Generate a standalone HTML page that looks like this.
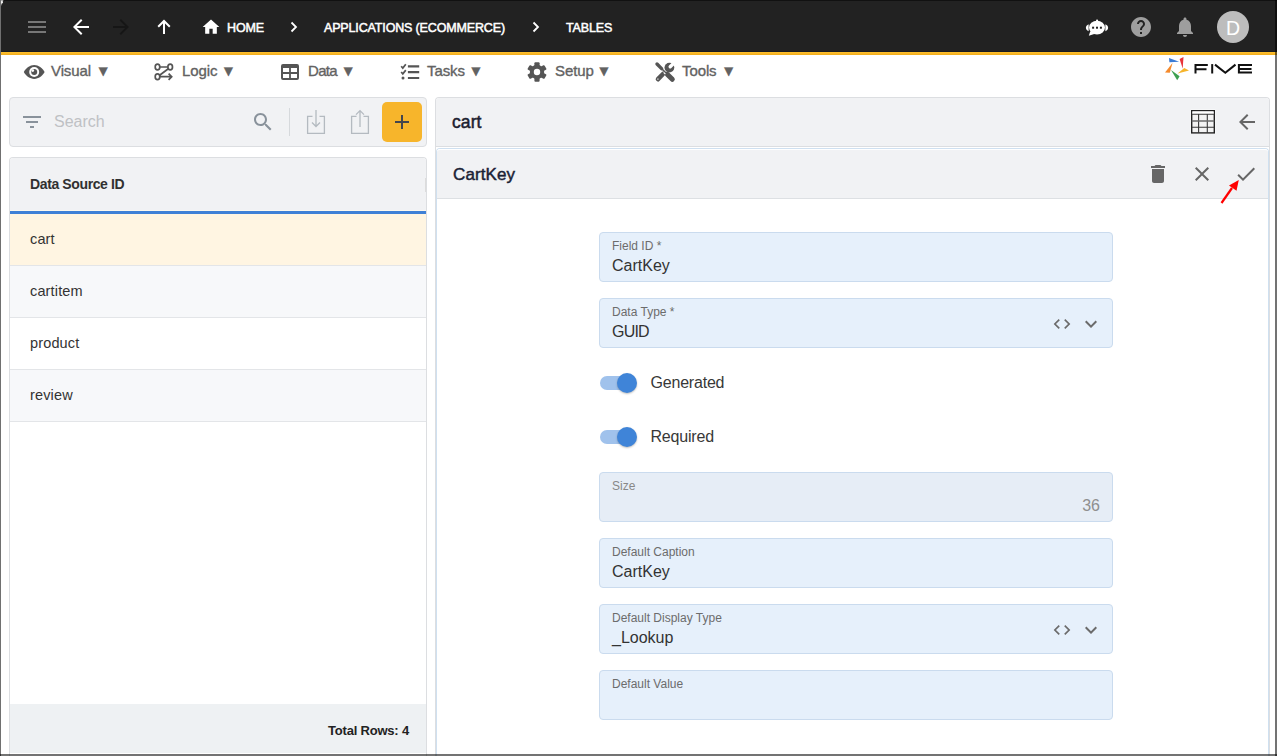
<!DOCTYPE html>
<html><head><meta charset="utf-8">
<style>
*{margin:0;padding:0;box-sizing:border-box}
html,body{width:1277px;height:756px;overflow:hidden;background:#fff;font-family:"Liberation Sans",sans-serif}
.a{position:absolute}
svg{position:absolute;overflow:visible}
#top{left:0;top:0;width:1277px;height:52px;background:#222}
#topline0{left:0;top:0;width:1277px;height:1px;background:#111}
#topline{left:0;top:51px;width:1277px;height:1px;background:#181b22}
#yel{left:0;top:52px;width:1277px;height:3px;background:linear-gradient(#fcbe2c 0,#fcbe2c 1px,#f8b626 1px,#f8b626 2px,#f2af1e 2px)}
.crumb{color:#fff;font-size:12.5px;top:20px;letter-spacing:-0.15px;-webkit-text-stroke:0.5px #fff;line-height:16px;white-space:nowrap}
.menu{color:#626262;font-size:15px;top:62px;letter-spacing:-0.1px;-webkit-text-stroke:0.35px #626262;line-height:18px;white-space:nowrap}
.panel{border:1px solid #dcdee1;border-radius:4px;background:#f1f2f4}
.row{left:10px;width:416px;height:52px;border-bottom:1px solid #e3e5e8}
.rowt{left:20px;top:16px;font-size:14.5px;letter-spacing:0.15px;color:#333;line-height:18px}
.fld{left:599px;width:514px;height:50px;border:1px solid #cadbee;border-radius:4px;background:#e6f0fb}
.lbl{left:12px;top:6px;font-size:12px;color:#6c6c6c;line-height:14px;white-space:nowrap}
.val{left:12px;top:22.8px;font-size:16px;color:#333;line-height:20px;white-space:nowrap}
.frame{background:rgba(0,0,0,.55)}
</style></head><body>
<!-- top bar -->
<div id="top" class="a"></div>
<div id="topline0" class="a"></div>
<div id="topline" class="a"></div>
<div id="yel" class="a"></div>

<!-- hamburger -->
<svg class="a" style="left:25px;top:15px" width="24" height="24" viewBox="0 0 24 24"><path d="M3 18h18v-2H3v2zm0-5h18v-2H3v2zm0-7v2h18V6H3z" fill="#777"/></svg>
<!-- back -->
<svg class="a" style="left:69px;top:15px" width="24" height="24" viewBox="0 0 24 24"><path d="M20 11H7.83l5.59-5.59L12 4l-8 8 8 8 1.41-1.41L7.83 13H20v-2z" fill="#fff"/></svg>
<!-- forward -->
<svg class="a" style="left:109px;top:15px" width="24" height="24" viewBox="0 0 24 24"><path d="M12 4l-1.41 1.41L16.17 11H4v2h12.17l-5.58 5.59L12 20l8-8z" fill="#161616"/></svg>
<!-- up -->
<svg class="a" style="left:152px;top:15px" width="24" height="24" viewBox="0 0 24 24"><path d="M12 6.2V19M6.2 11.8L12 6l5.8 5.8" stroke="#fff" stroke-width="2" fill="none"/></svg>
<!-- home -->
<svg class="a" style="left:201px;top:17px" width="20" height="20" viewBox="0 0 24 24"><path d="M10 20v-6h4v6h5v-8h3L12 3 2 12h3v8z" fill="#fff"/></svg>
<div class="a crumb" style="left:227px">HOME</div>
<svg class="a" style="left:285px;top:15px" width="18" height="24" viewBox="0 0 18 24"><path d="M6.5 7.5l4.5 4.5-4.5 4.5" stroke="#fff" stroke-width="1.8" fill="none"/></svg>
<div class="a crumb" style="left:324px">APPLICATIONS (ECOMMERCE)</div>
<svg class="a" style="left:527px;top:15px" width="18" height="24" viewBox="0 0 18 24"><path d="M6.5 7.5l4.5 4.5-4.5 4.5" stroke="#fff" stroke-width="1.8" fill="none"/></svg>
<div class="a crumb" style="left:566px">TABLES</div>

<!-- right top icons -->
<svg class="a" style="left:1085px;top:15px" width="24" height="24" viewBox="0 0 24 24" id="bot">
  <path d="M3.6 9.3C1.8 10.2 0.9 11.4 0.9 12.75S1.8 15.3 3.6 16.2z" fill="#fff"/>
  <path d="M20.4 9.3C22.2 10.2 23.1 11.4 23.1 12.75S22.2 15.3 20.4 16.2z" fill="#fff"/>
  <ellipse cx="12" cy="12.6" rx="8" ry="6.8" fill="#fff"/>
  <rect x="11" y="4.6" width="2.1" height="4" rx="1" fill="#fff"/>
  <path d="M5.3 16.2 L3.8 20.8 L10 18.8z" fill="#fff"/>
  <rect x="7.1" y="11.7" width="2" height="2" fill="#222"/>
  <rect x="11" y="11.7" width="2" height="2" fill="#222"/>
  <rect x="14.9" y="11.7" width="2" height="2" fill="#222"/>
</svg>
<svg class="a" style="left:1129px;top:15px" width="24" height="24" viewBox="0 0 24 24"><path d="M12 2C6.48 2 2 6.48 2 12s4.48 10 10 10 10-4.48 10-10S17.52 2 12 2zm1 17h-2v-2h2v2zm2.07-7.75l-.9.92C13.45 12.9 13 13.5 13 15h-2v-.5c0-1.1.45-2.1 1.17-2.83l1.24-1.26c.37-.36.59-.86.59-1.41 0-1.1-.9-2-2-2s-2 .9-2 2H8c0-2.21 1.79-4 4-4s4 1.79 4 4c0 .88-.36 1.68-.93 2.25z" fill="#9e9e9e"/></svg>
<svg class="a" style="left:1173px;top:15px" width="24" height="24" viewBox="0 0 24 24"><path d="M12 22c1.1 0 2-.9 2-2h-4c0 1.1.89 2 2 2zm6-6v-5c0-3.07-1.64-5.64-4.5-6.32V4c0-.83-.67-1.5-1.5-1.5s-1.5.67-1.5 1.5v.68C7.63 5.36 6 7.92 6 11v5l-2 2v1h16v-1l-2-2z" fill="#9e9e9e"/></svg>
<div class="a" style="left:1217px;top:11px;width:32px;height:32px;border-radius:50%;background:#bdbdbd;color:#fff;font-size:19.5px;line-height:34px;text-align:center">D</div>

<!-- menu bar -->
<svg class="a" style="left:23px;top:60px" width="24" height="24" viewBox="0 0 24 24">
  <path d="M0.8 12C3 8.1 6.9 5.1 11.2 5.1S19.4 8.1 21.6 12C19.4 15.9 15.5 18.9 11.2 18.9S3 15.9 0.8 12z" fill="#555"/>
  <circle cx="11.2" cy="12" r="5" fill="#fff"/>
  <circle cx="11.2" cy="12" r="3" fill="#555"/>
  <circle cx="9.8" cy="10.6" r="1.3" fill="#fff"/>
</svg>
<div class="a menu" style="left:51px">Visual</div><div class="a menu" style="left:95.8px">▼</div>
<div class="a menu" style="left:182px">Logic</div><div class="a menu" style="left:221px">▼</div>
<div class="a menu" style="left:308px;letter-spacing:-0.7px">Data</div><div class="a menu" style="left:340.8px">▼</div>
<div class="a menu" style="left:427px">Tasks</div><div class="a menu" style="left:468.5px">▼</div>
<div class="a menu" style="left:555px">Setup</div><div class="a menu" style="left:596.5px">▼</div>
<div class="a menu" style="left:682px">Tools</div><div class="a menu" style="left:721.2px">▼</div>

<!-- left toolbar -->
<div class="a panel" style="left:9px;top:97px;width:418px;height:50px"></div>
<!-- left table -->
<div class="a panel" style="left:9px;top:157px;width:418px;height:599px;background:#fff;border-bottom:none;border-radius:4px 4px 0 0"></div>
<div class="a" style="left:10px;top:158px;width:416px;height:52px;background:#f1f2f4;border-radius:3px 3px 0 0"></div><div class="a" style="left:10px;top:210px;width:416px;height:1px;background:#fcf8f0"></div>
<div class="a" style="left:30px;top:176px;font-size:14px;font-weight:bold;letter-spacing:-0.38px;color:#303030;line-height:16px">Data Source ID</div>
<div class="a" style="left:425px;top:178px;width:1px;height:14px;background:#dcdcdc"></div>
<div class="a" style="left:10px;top:211px;width:416px;height:3px;background:#3f80d6"></div>
<div class="a row" style="top:214px;background:#fff5e2"><div class="a rowt">cart</div></div>
<div class="a row" style="top:266px;background:#f7f8fa"><div class="a rowt">cartitem</div></div>
<div class="a row" style="top:318px;background:#fff"><div class="a rowt">product</div></div>
<div class="a row" style="top:370px;background:#f7f8fa"><div class="a rowt">review</div></div>
<div class="a" style="left:10px;top:704px;width:416px;height:49px;background:#eef1f3"></div>
<div class="a" style="left:328px;top:723px;font-size:13px;font-weight:bold;letter-spacing:-0.2px;color:#222;line-height:16px">Total Rows: 4</div>

<!-- right panel -->
<div class="a" style="left:435px;top:97px;width:835px;height:659px;border:1px solid #dcdee1;border-bottom:none;border-radius:4px 4px 0 0;background:#fff"></div>
<div class="a" style="left:436px;top:98px;width:833px;height:49px;background:#f1f2f4;border-bottom:1px solid #dcdee1;border-radius:3px 3px 0 0"></div>
<div class="a" style="left:452px;top:111.8px;font-size:17.5px;letter-spacing:0.1px;-webkit-text-stroke:0.5px #1c2130;color:#1c2130;line-height:20px">cart</div>

<!-- sub panel -->
<div class="a" style="left:436px;top:148px;width:833px;height:608px;border:1px solid #cfe0f0;border-bottom:none;border-radius:4px 4px 0 0;background:#fff"></div>
<div class="a" style="left:437px;top:149px;width:831px;height:50px;background:#f1f2f4;border-bottom:1px solid #dde0e3;border-top:1px solid #fff;border-radius:3px 3px 0 0"></div>
<div class="a" style="left:453px;top:165px;font-size:17px;letter-spacing:0.1px;-webkit-text-stroke:0.45px #1a2235;color:#1a2235;line-height:20px">CartKey</div>

<!-- fields -->
<div class="a fld" style="top:232px"><div class="a lbl">Field ID *</div><div class="a val">CartKey</div></div>
<div class="a fld" style="top:298px"><div class="a lbl">Data Type *</div><div class="a val" style="letter-spacing:-0.8px">GUID</div></div>
<div class="a fld" style="top:472px;background:#e6edf6"><div class="a lbl" style="color:#888">Size</div><div class="a val" style="left:auto;right:12px;color:#8f8f8f">36</div></div>
<div class="a fld" style="top:538px"><div class="a lbl">Default Caption</div><div class="a val">CartKey</div></div>
<div class="a fld" style="top:604px"><div class="a lbl">Default Display Type</div><div class="a val">_Lookup</div></div>
<div class="a fld" style="top:670px"><div class="a lbl">Default Value</div></div>

<!-- toggles -->
<div class="a" style="left:600px;top:376px;width:34px;height:14px;border-radius:7px;background:#a0c2ec"></div>
<div class="a" style="left:617px;top:373px;width:20px;height:20px;border-radius:50%;background:#3f84d8;box-shadow:0 1px 2px rgba(0,0,0,.25)"></div>
<div class="a" style="left:650.5px;top:374px;font-size:16px;letter-spacing:-0.2px;color:#383838;line-height:18px">Generated</div>
<div class="a" style="left:600px;top:430px;width:34px;height:14px;border-radius:7px;background:#a0c2ec"></div>
<div class="a" style="left:617px;top:427px;width:20px;height:20px;border-radius:50%;background:#3f84d8;box-shadow:0 1px 2px rgba(0,0,0,.25)"></div>
<div class="a" style="left:650.5px;top:428px;font-size:16px;letter-spacing:-0.2px;color:#383838;line-height:18px">Required</div>


<!-- menu icons -->
<svg class="a" style="left:150px;top:60px" width="24" height="24" viewBox="0 0 24 24" fill="none" stroke="#555" stroke-width="1.7">
  <ellipse cx="7.5" cy="7" rx="2.3" ry="2.9"/>
  <ellipse cx="20.2" cy="7" rx="2.3" ry="2.9"/>
  <ellipse cx="7.5" cy="16.7" rx="2.3" ry="2.9"/>
  <path d="M9.8 7h8.1M18.3 8.8L9.6 15.2M9.8 16.7h11.6M18.6 13.6l3.1 3.1-3.1 3.1"/>
</svg>
<svg class="a" style="left:278px;top:60px" width="24" height="24" viewBox="0 0 24 24">
  <path fill="#555" fill-rule="evenodd" d="M5 4h14a2 2 0 0 1 2 2v12a2 2 0 0 1-2 2H5a2 2 0 0 1-2-2V6a2 2 0 0 1 2-2zM5 8v4.1h6.1V8zM12.9 8v4.1H19V8zM5 13.9V18h6.1v-4.1zM12.9 13.9V18H19v-4.1z"/>
</svg>
<svg class="a" style="left:398px;top:60px" width="24" height="24" viewBox="0 0 24 24">
  <path d="M3.2 6.2l1.6 1.9 3-3.8M3.2 12l1.6 1.9 3-3.8" stroke="#555" stroke-width="1.7" fill="none"/>
  <circle cx="5" cy="18" r="1.5" fill="#555"/>
  <path d="M9.9 6.3h11.3M9.9 12.1h11.3M9.9 18h11.3" stroke="#555" stroke-width="2.2"/>
</svg>
<svg class="a" style="left:525px;top:60px" width="24" height="24" viewBox="0 0 24 24">
  <g fill="#555">
  <rect x="9.4" y="2.2" width="5.2" height="5" rx="1"/>
  <rect x="9.4" y="2.2" width="5.2" height="5" rx="1" transform="rotate(60 12 12)"/>
  <rect x="9.4" y="2.2" width="5.2" height="5" rx="1" transform="rotate(120 12 12)"/>
  <rect x="9.4" y="2.2" width="5.2" height="5" rx="1" transform="rotate(180 12 12)"/>
  <rect x="9.4" y="2.2" width="5.2" height="5" rx="1" transform="rotate(240 12 12)"/>
  <rect x="9.4" y="2.2" width="5.2" height="5" rx="1" transform="rotate(300 12 12)"/>
  <path fill-rule="evenodd" d="M12 4.8a7.2 7.2 0 1 1 0 14.4a7.2 7.2 0 1 1 0-14.4zM12 8.8a3.2 3.2 0 1 0 0 6.4a3.2 3.2 0 1 0 0-6.4z"/>
  </g>
</svg>
<svg class="a" style="left:653px;top:60px" width="24" height="24" viewBox="0 0 24 24">
  <path d="M4 4L8.6 8.6" stroke="#555" stroke-width="3.4" stroke-linecap="round"/>
  <path d="M8.5 8.5L13 13" stroke="#555" stroke-width="1.6"/>
  <path d="M14.2 14.2L19.3 19.3" stroke="#555" stroke-width="5" stroke-linecap="round"/>
  <path d="M5 19.2L10 14" stroke="#555" stroke-width="4.6" stroke-linecap="round"/>
  <circle cx="4.9" cy="19.1" r="0.9" fill="#bbb"/>
  <circle cx="16.4" cy="7.6" r="4.9" fill="#555"/>
  <path d="M17.2 6.8L22 2" stroke="#fff" stroke-width="3.4" stroke-linecap="round"/>
  <path d="M10.6 12.4l1.8 1.8" stroke="#fff" stroke-width="1.2"/>
</svg>

<!-- FIVE logo -->
<svg class="a" style="left:1160px;top:52px" width="100" height="33" viewBox="0 0 100 33">
  <path d="M9 5.9L9.4 10.2L19.2 9.8z" fill="#3a7bd5"/>
  <path d="M19.6 7L23.5 5.1L22.7 16.4z" fill="#e8343a"/>
  <path d="M24.3 16L29 18.4L17.6 21.5z" fill="#f6b42a"/>
  <path d="M11 18L19.6 24.3L17.2 28.2z" fill="#3ea050"/>
  <path d="M12.5 11L5 20.4L9.8 20.8z" fill="#f58a2c"/>
  <g fill="none" stroke="#111" stroke-width="2">
  <path d="M35.5 12.6V21.5M34.5 13.1H47.8M35.5 17.2H46.5"/>
  <path d="M52.2 12.1V21.5"/>
  <path d="M55 12.6L65.3 20.8L75.5 12.6"/>
  <path d="M92 13.1H78.9V20.5H92M78.9 17H91.5"/>
  </g>
</svg>
<!-- search toolbar -->
<svg class="a" style="left:20px;top:110px" width="24" height="24" viewBox="0 0 24 24"><path d="M10 18h4v-2h-4v2zM3 6v2h18V6H3zm3 7h12v-2H6v2z" fill="#89929b"/></svg>
<div class="a" style="left:54px;top:113px;font-size:16px;color:#bfc1c4;line-height:18px">Search</div>
<svg class="a" style="left:251px;top:110px" width="24" height="24" viewBox="0 0 24 24"><path d="M15.5 14h-.79l-.28-.27C15.41 12.59 16 11.11 16 9.5 16 5.91 13.09 3 9.5 3S3 5.91 3 9.5 5.91 16 9.5 16c1.61 0 3.09-.59 4.23-1.57l.27.28v.79l5 4.99L20.49 19l-4.99-5zm-6 0C7.01 14 5 11.99 5 9.5S7.01 5 9.5 5 14 7.01 14 9.5 11.99 14 9.5 14z" fill="#89929b"/></svg>
<div class="a" style="left:289px;top:108px;width:1px;height:28px;background:#d6d9dc"></div>
<svg class="a" style="left:304px;top:108px" width="24" height="28" viewBox="0 0 24 28" fill="none" stroke="#b4bac0" stroke-width="1.3">
  <path d="M8.5 8.3H3.6V25.4H20.4V8.3H15.5"/>
  <path d="M12 2V18.5M8 14.5l4 4 4-4"/>
</svg>
<svg class="a" style="left:348px;top:108px" width="24" height="28" viewBox="0 0 24 28" fill="none" stroke="#b4bac0" stroke-width="1.3">
  <path d="M8.5 8.3H3.6V25.4H20.4V8.3H15.5"/>
  <path d="M12 19V2.6M8 6.6l4-4 4 4"/>
</svg>
<div class="a" style="left:382px;top:102px;width:40px;height:40px;border-radius:5px;background:#f7b52b"></div>
<svg class="a" style="left:390px;top:110px" width="24" height="24" viewBox="0 0 24 24"><path d="M5 12h14M12 5v14" stroke="#43454c" stroke-width="2"/></svg>
<!-- right header icons -->
<svg class="a" style="left:1190px;top:109px" width="27" height="27" viewBox="0 0 27 27">
  <rect x="0.6" y="0.6" width="24.8" height="24.4" fill="#fff"/>
  <rect x="1.7" y="1.7" width="22.6" height="22.2" fill="#f3f3f3" stroke="#222" stroke-width="1.4"/>
  <rect x="2.4" y="2.4" width="21.2" height="2.9" fill="#fff"/>
  <path d="M1.7 5.3H24.3M1.7 18.3H24.3M8.6 5.3V23.9M17.3 5.3V23.9" stroke="#383838" stroke-width="1.1"/>
  <path d="M1.7 12H24.3" stroke="#6a6a6a" stroke-width="1.5"/>
</svg>
<svg class="a" style="left:1235px;top:110px" width="24" height="24" viewBox="0 0 24 24"><path d="M20 11H7.83l5.59-5.59L12 4l-8 8 8 8 1.41-1.41L7.83 13H20v-2z" fill="#666"/></svg>
<svg class="a" style="left:1146px;top:162px" width="24" height="24" viewBox="0 0 24 24"><path d="M6 19c0 1.1.9 2 2 2h8c1.1 0 2-.9 2-2V7H6v12zM19 4h-3.5l-1-1h-5l-1 1H5v2h14V4z" fill="#666"/></svg>
<svg class="a" style="left:1190px;top:162px" width="24" height="24" viewBox="0 0 24 24"><path d="M19 6.41L17.59 5 12 10.59 6.41 5 5 6.41 10.59 12 5 17.59 6.41 19 12 13.41 17.59 19 19 17.59 13.41 12z" fill="#666"/></svg>
<svg class="a" style="left:1234px;top:162px" width="24" height="24" viewBox="0 0 24 24"><path d="M9 16.17L4.83 12l-1.42 1.41L9 19 21 7l-1.41-1.41z" fill="#666"/></svg>
<!-- red arrow -->
<svg class="a" style="left:0;top:0" width="1277" height="756" viewBox="0 0 1277 756">
  <path d="M1221.5 203L1232 188" stroke="#f00" stroke-width="2.2"/>
  <path d="M1238.8 180L1229 185.5L1236.5 190.8z" fill="#f00"/>
</svg>
<!-- field icons -->
<svg class="a" style="left:1052px;top:314px" width="20" height="20" viewBox="0 0 24 24"><path d="M9.4 16.6L4.8 12l4.6-4.6L8 6l-6 6 6 6 1.4-1.4zm5.2 0l4.6-4.6-4.6-4.6L16 6l6 6-6 6-1.4-1.4z" fill="#6b6b6b"/></svg>
<svg class="a" style="left:1079px;top:312px" width="24" height="24" viewBox="0 0 24 24"><path d="M16.59 8.59L12 13.17 7.41 8.59 6 10l6 6 6-6z" fill="#6b6b6b"/></svg>
<svg class="a" style="left:1052px;top:620px" width="20" height="20" viewBox="0 0 24 24"><path d="M9.4 16.6L4.8 12l4.6-4.6L8 6l-6 6 6 6 1.4-1.4zm5.2 0l4.6-4.6-4.6-4.6L16 6l6 6-6 6-1.4-1.4z" fill="#6b6b6b"/></svg>
<svg class="a" style="left:1079px;top:618px" width="24" height="24" viewBox="0 0 24 24"><path d="M16.59 8.59L12 13.17 7.41 8.59 6 10l6 6 6-6z" fill="#6b6b6b"/></svg>

<!-- frame -->
<svg class="a" style="left:0;top:0" width="6" height="7" viewBox="0 0 6 7"><path d="M0 0H3.5L1 6H0z" fill="#aaa"/><circle cx="1.6" cy="2.2" r="1.3" fill="#eee"/></svg>
<div class="a" style="left:0;top:0;width:1px;height:756px;background:#707070"></div>
<div class="a frame" style="left:1275px;top:0;width:2px;height:756px"></div>
<div class="a frame" style="left:0;top:754px;width:1277px;height:2px"></div>
</body></html>
